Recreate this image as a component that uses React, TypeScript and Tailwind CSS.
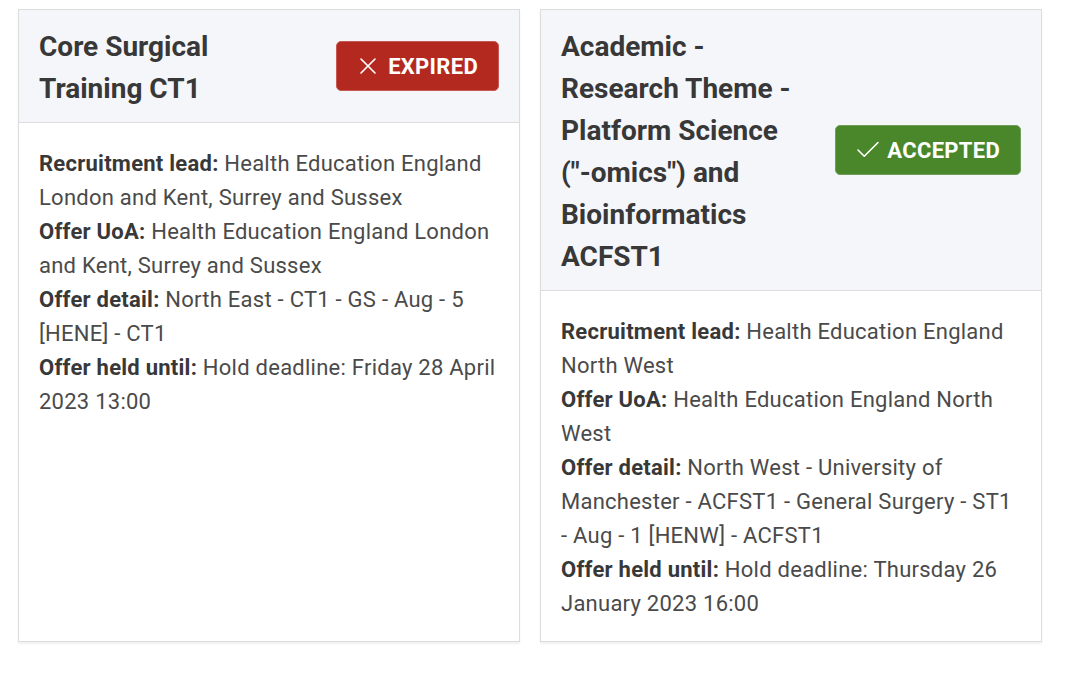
import type { ReactNode } from "react";
import { X, Check } from "lucide-react";

type Row = { label: string; value: string };

type Offer = {
  id: string;
  title: ReactNode;
  status: "expired" | "accepted";
  rows: Row[];
};

const offers: Offer[] = [
  {
    id: "ct1",
    title: "Core Surgical Training CT1",
    status: "expired",
    rows: [
      { label: "Recruitment lead:", value: "Health Education England London and Kent, Surrey and Sussex" },
      { label: "Offer UoA:", value: "Health Education England London and Kent, Surrey and Sussex" },
      { label: "Offer detail:", value: "North East - CT1 - GS - Aug - 5 [HENE] - CT1" },
      { label: "Offer held until:", value: "Hold deadline: Friday 28 April 2023 13:00" },
    ],
  },
  {
    id: "acfst1",
    title: (
      <>
        Academic - Research Theme - Platform Science{" "}
        <span className="whitespace-nowrap">("-omics")</span> and Bioinformatics ACFST1
      </>
    ),
    status: "accepted",
    rows: [
      { label: "Recruitment lead:", value: "Health Education England North West" },
      { label: "Offer UoA:", value: "Health Education England North West" },
      {
        label: "Offer detail:",
        value: "North West - University of Manchester - ACFST1 - General Surgery - ST1 - Aug - 1 [HENW] - ACFST1",
      },
      { label: "Offer held until:", value: "Hold deadline: Thursday 26 January 2023 16:00" },
    ],
  },
];

function StatusBadge({ status }: { status: Offer["status"] }) {
  if (status === "expired") {
    return (
      <div className="shrink-0 flex items-center gap-[6px] h-[50px] pl-[17px] pr-5 rounded-[5px] bg-[#b3291f] border border-[#c65a52] text-white text-[22px] tracking-[0.3px] font-bold uppercase">
        <X size={28} strokeWidth={1.4} />
        <span>Expired</span>
      </div>
    );
  }
  return (
    <div className="shrink-0 flex items-center gap-[4px] h-[50px] pl-[17px] pr-5 rounded-[5px] bg-[#4a872b] border border-[#6f9e57] text-white text-[22px] tracking-[0.3px] font-bold uppercase">
      <Check size={30} strokeWidth={1.3} />
      <span>Accepted</span>
    </div>
  );
}

function OfferCard({ offer }: { offer: Offer }) {
  return (
    <div className="flex flex-col bg-white border border-[#dcdcdc] shadow-[0_2px_2px_rgba(0,0,0,0.06)]">
      {/* 헤더 */}
      <div className="flex items-center gap-5 px-5 py-[14px] bg-[#f5f6fa] border-b border-[#dcdcdc]">
        <h2 className="flex-1 pt-[2px] -mb-[2px] text-[28px] leading-[42px] font-bold text-[#383838]">
          {offer.title}
        </h2>
        <StatusBadge status={offer.status} />
      </div>

      {/* 본문 */}
      <div className="px-5 pt-6 pb-5 text-[22px] tracking-[0.25px] leading-[34px] text-[#4a4a4a]">
        {offer.rows.map((row) => (
          <p key={row.label}>
            <span className="font-bold text-[#383838]">{row.label}</span> {row.value}
          </p>
        ))}
      </div>
    </div>
  );
}

export default function App() {
  return (
    <div className="w-[1080px] h-[675px] bg-white font-['Roboto',sans-serif]">
      <div className="grid grid-cols-[502px_502px] gap-5 pl-[18px] pt-[9px] items-stretch">
        {offers.map((o) => (
          <OfferCard key={o.id} offer={o} />
        ))}
      </div>
    </div>
  );
}
